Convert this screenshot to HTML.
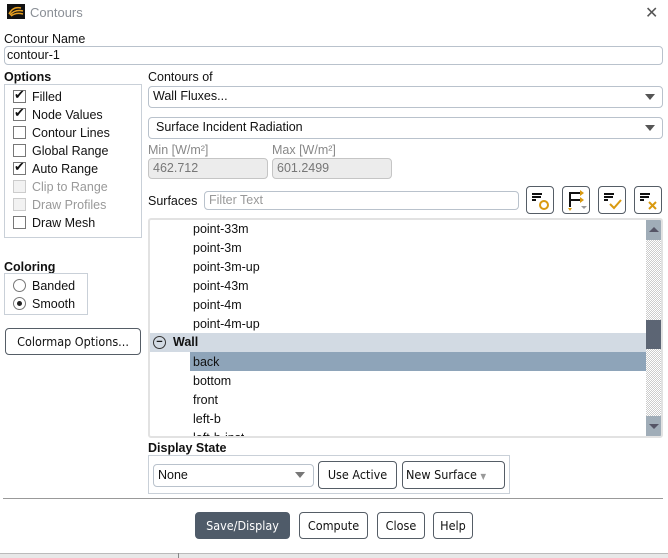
<!DOCTYPE html><html><head><style>
*{box-sizing:border-box}
body{margin:0;width:668px;height:558px;background:#fff;font-family:"Liberation Sans","Noto Sans CJK JP",sans-serif;font-size:12.5px;color:#111;position:relative;overflow:hidden}
.a{position:absolute;white-space:nowrap}
.box{position:absolute;border:1px solid #c9d0d8}
.inp{position:absolute;border:1px solid #b9c2cc;border-radius:4px;background:#fff;padding-left:4px;line-height:19px}
.dis{background:#ececec;color:#777;border-color:#c5c5c5}
.cb{position:absolute;left:13px;width:13px;height:13px;border:1px solid #777;background:#fff}
.cb.g{border-color:#ccc;background:#f2f2f2}
.lbl{position:absolute;left:32px}
.btn{position:absolute;border:1px solid #555d66;border-radius:4px;background:#fff;text-align:center;font-family:"DejaVu Sans Condensed","Liberation Sans",sans-serif;font-size:12.5px}
.ib{position:absolute;top:186px;width:28px;height:28px;border:1px solid #555d66;border-radius:4px;background:#fff}
.tri{position:absolute;width:0;height:0;border-left:5px solid transparent;border-right:5px solid transparent;border-top:6px solid #555}
.li{position:absolute;left:193px}
</style></head><body>
<div class="a" style="left:0;top:0;width:668px;height:24px;background:#fff"></div>
<svg class="a" style="left:7px;top:4px" width="18" height="15"><rect width="18" height="15" fill="#111"/><path d="M2 10 Q6 2 14 4 M3 11 Q8 5 16 7 M4 12 Q9 8 16 10" stroke="#e8a020" stroke-width="1.5" fill="none"/></svg>
<div class="a" style="left:30px;top:5px;color:#8a8f96;font-size:13px">Contours</div>
<div class="a" style="left:645px;top:3px;font-size:16px;color:#555">✕</div>
<div class="a" style="left:4px;top:32px">Contour Name</div>
<div class="inp" style="left:4px;top:46px;width:659px;height:19px;line-height:17px;padding-left:2px">contour-1</div>
<div class="a" style="left:4px;top:70px;font-weight:bold">Options</div>
<div class="box" style="left:4px;top:84px;width:138px;height:154px"></div>
<div class="cb" style="top:90px"></div><div class="lbl a" style="top:90px">Filled</div>
<div class="cb" style="top:108px"></div><div class="lbl a" style="top:108px">Node Values</div>
<div class="cb" style="top:126px"></div><div class="lbl a" style="top:126px">Contour Lines</div>
<div class="cb" style="top:144px"></div><div class="lbl a" style="top:144px">Global Range</div>
<div class="cb" style="top:162px"></div><div class="lbl a" style="top:162px">Auto Range</div>
<div class="cb g" style="top:180px"></div><div class="lbl a" style="top:180px;color:#999">Clip to Range</div>
<div class="cb g" style="top:198px"></div><div class="lbl a" style="top:198px;color:#999">Draw Profiles</div>
<div class="cb" style="top:216px"></div><div class="lbl a" style="top:216px">Draw Mesh</div>
<div class="a" style="left:14px;top:87px;font-size:13px">✔</div>
<div class="a" style="left:14px;top:105px;font-size:13px">✔</div>
<div class="a" style="left:14px;top:159px;font-size:13px">✔</div>
<div class="a" style="left:4px;top:260px;font-weight:bold">Coloring</div>
<div class="box" style="left:4px;top:273px;width:84px;height:42px"></div>
<div class="a" style="left:13px;top:279px;width:13px;height:13px;border:1px solid #777;border-radius:50%"></div>
<div class="a" style="left:32px;top:279px">Banded</div>
<div class="a" style="left:13px;top:297px;width:13px;height:13px;border:1px solid #777;border-radius:50%"><div class="a" style="left:3px;top:3px;width:5px;height:5px;border-radius:50%;background:#222"></div></div>
<div class="a" style="left:32px;top:297px">Smooth</div>
<div class="btn" style="left:5px;top:328px;width:136px;height:27px;line-height:25px">Colormap Options...</div>
<div class="a" style="left:148px;top:70px">Contours of</div>
<div class="inp" style="left:148px;top:86px;width:515px;height:22px">Wall Fluxes...</div><div class="tri" style="left:645px;top:94px"></div>
<div class="inp" style="left:148px;top:117px;width:515px;height:22px;padding-left:7px">Surface Incident Radiation</div><div class="tri" style="left:645px;top:125px"></div>
<div class="a" style="left:148px;top:143px;color:#888">Min [W/m²]</div>
<div class="a" style="left:272px;top:143px;color:#888">Max [W/m²]</div>
<div class="inp dis" style="left:148px;top:158px;width:120px;height:21px">462.712</div>
<div class="inp dis" style="left:272px;top:158px;width:120px;height:21px">601.2499</div>
<div class="a" style="left:148px;top:194px">Surfaces</div>
<div class="inp" style="left:204px;top:191px;width:315px;height:19px;line-height:17px;color:#999">Filter Text</div>
<div class="ib" style="left:526px"><svg width="26" height="26"><path d="M5 7h10M5 10h9M5 13h4" stroke="#111" stroke-width="2"/><circle cx="17" cy="18" r="4" stroke="#d99a10" stroke-width="2" fill="none"/></svg></div>
<div class="ib" style="left:562px"><svg width="26" height="26"><path d="M7 20V6h10M7 13h10" stroke="#111" stroke-width="2" fill="none"/><path d="M17 3l4 3-4 3zM17 10l4 3-4 3zM5 21l2 3 2-3z" fill="#d99a10"/><path d="M18 19l3 3 3-3z" fill="#999"/></svg></div>
<div class="ib" style="left:598px"><svg width="26" height="26"><path d="M5 7h10M5 10h9M5 13h4" stroke="#111" stroke-width="2"/><path d="M11 17l4 4 7-8" stroke="#d99a10" stroke-width="2" fill="none"/></svg></div>
<div class="ib" style="left:634px"><svg width="26" height="26"><path d="M5 7h10M5 10h9M5 13h4" stroke="#111" stroke-width="2"/><path d="M14 15l7 7M21 15l-7 7" stroke="#d99a10" stroke-width="2"/></svg></div>
<div class="a" style="left:148px;top:218px;width:515px;height:220px;border:2px solid #e2e2e2;border-radius:3px;overflow:hidden">
<div class="a" style="left:0;top:113px;width:500px;height:19px;background:#d2dae3"></div>
<div class="a" style="left:40px;top:132px;width:460px;height:19px;background:#8ea4b9"></div>
<div class="a" style="left:496px;top:0;width:17px;height:216px;background:repeating-conic-gradient(#ccc 0 25%,#fff 0 50%) 0 0/2px 2px"></div>
<div class="a" style="left:496px;top:0;width:15px;height:20px;background:#a0adb8"></div>
<div class="a" style="left:499px;top:7px;border-left:5px solid transparent;border-right:5px solid transparent;border-bottom:5px solid #556"></div>
<div class="a" style="left:496px;top:100px;width:15px;height:29px;background:#5c6574"></div>
<div class="a" style="left:496px;top:196px;width:15px;height:20px;background:#a0adb8"></div>
<div class="a" style="left:499px;top:204px;border-left:5px solid transparent;border-right:5px solid transparent;border-top:5px solid #556"></div>
</div>
<div class="li a" style="top:222px">point-33m</div>
<div class="li a" style="top:241px">point-3m</div>
<div class="li a" style="top:260px">point-3m-up</div>
<div class="li a" style="top:279px">point-43m</div>
<div class="li a" style="top:298px">point-4m</div>
<div class="li a" style="top:317px">point-4m-up</div>
<div class="a" style="left:153px;top:336px;width:13px;height:13px;border:1px solid #333;border-radius:50%;font-size:11px;line-height:10px;text-align:center;font-weight:bold">−</div>
<div class="a" style="left:173px;top:335px;font-weight:bold">Wall</div>
<div class="li a" style="top:355px">back</div>
<div class="li a" style="top:374px">bottom</div>
<div class="li a" style="top:393px">front</div>
<div class="li a" style="top:412px">left-b</div>
<div class="li a" style="top:431px;height:5px;overflow:hidden">left-b-inst</div>
<div class="a" style="left:148px;top:441px;font-weight:bold">Display State</div>
<div class="box" style="left:148px;top:455px;width:362px;height:39px"></div>
<div class="inp" style="left:153px;top:464px;width:161px;height:23px;line-height:21px">None</div><div class="tri" style="left:295px;top:472px;border-top-color:#777"></div>
<div class="btn" style="left:318px;top:461px;width:79px;height:28px;line-height:26px">Use Active</div>
<div class="btn" style="left:402px;top:461px;width:103px;height:28px;line-height:26px;text-align:left;padding-left:3px">New Surface <span style="color:#999;font-size:8px">▼</span></div>
<div class="a" style="left:3px;top:498px;width:660px;height:1px;background:#999"></div>
<div class="btn" style="left:195px;top:512px;width:95px;height:27px;line-height:25px;background:#4f5b69;color:#fff;border-color:#4f5b69">Save/Display</div>
<div class="btn" style="left:299px;top:512px;width:69px;height:27px;line-height:25px">Compute</div>
<div class="btn" style="left:377px;top:512px;width:48px;height:27px;line-height:25px">Close</div>
<div class="btn" style="left:433px;top:512px;width:40px;height:27px;line-height:25px">Help</div>
<div class="a" style="left:0;top:553px;width:668px;height:5px;background:#e8e8e8;border-top:1px solid #bbb"></div>
<div class="a" style="left:178px;top:553px;width:1px;height:5px;background:#888"></div>
</body></html>
